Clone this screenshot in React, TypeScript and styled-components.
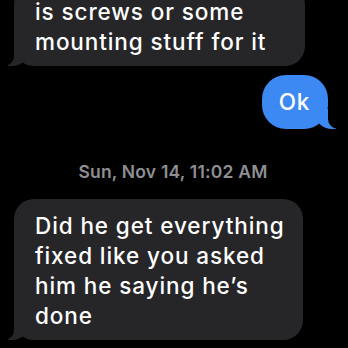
import React from "react";
import styled, { createGlobalStyle, css } from "styled-components";

const GlobalStyle = createGlobalStyle`
  html, body {
    margin: 0;
    padding: 0;
    background: #000;
    overflow: hidden;
  }
  body {
    width: 348px;
    height: 348px;
    font-family: "Inter", "Liberation Sans", sans-serif;
    -webkit-font-smoothing: antialiased;
  }
`;

const Screen = styled.div`
  width: 348px;
  height: 348px;
  overflow: hidden;
  background: #000;
`;

const Thread = styled.div`
  display: flex;
  flex-direction: column;
  padding: 0 20px 0 14px;
  margin-top: -15px;
`;

type Side = "me" | "them";

const Row = styled.div<{ $side: Side; $gap?: number }>`
  display: flex;
  justify-content: ${(p) => (p.$side === "me" ? "flex-end" : "flex-start")};
  margin-top: ${(p) => p.$gap ?? 0}px;
`;

const themColor = "#262628";
const meColor = "#3c89f4";

const Bubble = styled.div<{ $side: Side; $minWidth?: number }>`
  position: relative;
  box-sizing: border-box;
  min-width: ${(p) => (p.$minWidth ? `${p.$minWidth}px` : "0")};
  padding: 12px 18px 9px 21px;
  border-radius: 20px;
  font-size: 22.5px;
  line-height: 30px;
  font-weight: 500;
  letter-spacing: 0.9px;
  color: #fff;
  white-space: nowrap;
  background: ${(p) => (p.$side === "me" ? meColor : themColor)};

  &::before,
  &::after {
    content: "";
    position: absolute;
    bottom: 0;
    height: 20px;
  }

  ${(p) =>
    p.$side === "them"
      ? css`
          &::before {
            left: -6px;
            border-left: 20px solid ${themColor};
            border-bottom-right-radius: 16px 14px;
          }
          &::after {
            left: -26px;
            width: 26px;
            background: #000;
            border-bottom-right-radius: 10px;
          }
        `
      : css`
          &::before {
            right: -8px;
            border-right: 20px solid ${meColor};
            border-bottom-left-radius: 16px 14px;
          }
          &::after {
            right: -26px;
            width: 26px;
            background: #000;
            border-bottom-left-radius: 10px;
          }
        `}
`;

const ShortBubble = styled(Bubble)`
  padding: 12px 18px 12px 17px;
  border-radius: 24px;
  letter-spacing: 0.75px;
`;

const Line = styled.span`
  display: block;
  position: relative;
  z-index: 1;
`;

const Stamp = styled.div`
  margin: 33px 0 17px;
  text-align: center;
  font-size: 17.5px;
  line-height: 20px;
  font-weight: 600;
  letter-spacing: 0.2px;
  color: #8e8e93;
  padding-left: 4px;
`;

export default function App() {
  return (
    <Screen>
      <GlobalStyle />
      <Thread>
        <Row $side="them">
          <Bubble $side="them" $minWidth={291}>
            <Line>is screws or some</Line>
            <Line>mounting stuff for it</Line>
          </Bubble>
        </Row>
        <Row $side="me" $gap={9}>
          <ShortBubble $side="me">
            <Line>Ok</Line>
          </ShortBubble>
        </Row>
        <Stamp>Sun, Nov 14, 11:02 AM</Stamp>
        <Row $side="them">
          <Bubble $side="them">
            <Line>Did he get everything</Line>
            <Line>fixed like you asked</Line>
            <Line>him he saying he’s</Line>
            <Line>done</Line>
          </Bubble>
        </Row>
      </Thread>
    </Screen>
  );
}
